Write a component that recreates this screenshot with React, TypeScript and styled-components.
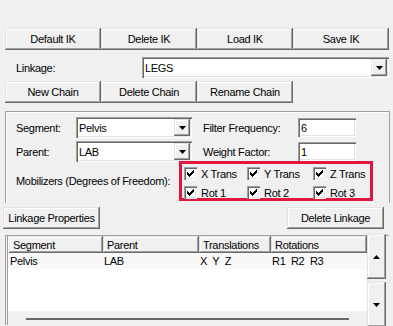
import styled, { createGlobalStyle } from 'styled-components';

const GlobalStyle = createGlobalStyle`
	html, body {
		margin: 0;
		padding: 0;
		background: #f0f0f0;
	}
	body {
		font-family: "Liberation Sans", Arial, sans-serif;
		font-size: 11px;
		letter-spacing: -0.3px;
		color: #000;
	}
`;

const raised = `
	background: #f0f0f0;
	box-shadow: inset -1px -1px #696969, inset 1px 1px #e3e3e3, inset -2px -2px #a0a0a0, inset 2px 2px #fff;
`;

const sunken = `
	background: #fff;
	box-shadow: inset 1px 1px #a0a0a0, inset 2px 2px #696969, inset -1px -1px #fff, inset -2px -2px #e3e3e3;
`;

const columns = [
	{ title: 'Segment', width: 94 },
	{ title: 'Parent', width: 96 },
	{ title: 'Translations', width: 72 },
	{ title: 'Rotations', width: 96 },
];

const rows = [['Pelvis', 'LAB', 'X  Y  Z', 'R1  R2  R3']];

const mobilizers = [
	['X Trans', 'Y Trans', 'Z Trans'],
	['Rot 1', 'Rot 2', 'Rot 3'],
];

const Arrow = ({ up }: { up?: boolean }) => (
	<svg width="7" height="4" viewBox="0 0 7 4">
		<polygon points={up ? '3.5,0 7,4 0,4' : '0,0 7,0 3.5,4'} fill="#000" />
	</svg>
);

const Select = ({ value, width }: { value: string; width: number }) => (
	<SelectBox $w={width}>
		<SelectText>{value}</SelectText>
		<DropButton>
			<Arrow />
		</DropButton>
	</SelectBox>
);

const Check = ({ label }: { label: string }) => (
	<CheckItem>
		<CheckBox>
			<svg width="7" height="7" viewBox="0 0 7 7">
				<path d="M0 2h1v1h1v1h1V3h1V2h1V1h1V0h1v3H6v1H5v1H4v1H3v1H2V6H1V5H0z" fill="#000" />
			</svg>
		</CheckBox>
		<CheckLabel>{label}</CheckLabel>
	</CheckItem>
);

export default function App() {
	return (
		<Page>
			<GlobalStyle />
			<ButtonRow>
				<Button>Default IK</Button>
				<Button>Delete IK</Button>
				<Button>Load IK</Button>
				<Button>Save IK</Button>
			</ButtonRow>

			<LinkageRow>
				<RowLabel>Linkage:</RowLabel>
				<Select value="LEGS" width={247} />
			</LinkageRow>

			<ChainRow>
				<Button>New Chain</Button>
				<Button>Delete Chain</Button>
				<Button>Rename Chain</Button>
			</ChainRow>

			<GroupBox>
				<FieldRow>
					<FieldLabel>Segment:</FieldLabel>
					<Select value="Pelvis" width={116} />
					<SideLabel>Filter Frequency:</SideLabel>
					<TextInput>6</TextInput>
				</FieldRow>
				<FieldRow>
					<FieldLabel>Parent:</FieldLabel>
					<Select value="LAB" width={116} />
					<SideLabel>Weight Factor:</SideLabel>
					<TextInput>1</TextInput>
				</FieldRow>
				<MobilizerRow>
					<MobilizerLabel>Mobilizers (Degrees of Freedom):</MobilizerLabel>
					<Highlight>
						{mobilizers.map((line, i) => (
							<CheckLine key={i}>
								{line.map((m) => (
									<Check key={m} label={m} />
								))}
							</CheckLine>
						))}
					</Highlight>
				</MobilizerRow>
			</GroupBox>

			<LinkageButtons>
				<Button $w={97}>Linkage Properties</Button>
				<Button $w={97}>Delete Linkage</Button>
			</LinkageButtons>

			<ListFrame>
				<ListView>
					<HeaderRow>
						{columns.map((c) => (
							<HeaderCell key={c.title} $w={c.width}>
								{c.title}
							</HeaderCell>
						))}
					</HeaderRow>
					<ListBody>
						{rows.map((r, i) => (
							<ListRow key={i}>
								{r.map((cell, j) => (
									<ListCell key={j} $w={columns[j].width}>
										{cell}
									</ListCell>
								))}
							</ListRow>
						))}
					</ListBody>
					<HScroll>
						<HThumb />
					</HScroll>
				</ListView>
				<SpinColumn>
					<SpinButton>
						<Arrow up />
					</SpinButton>
					<SpinButton>
						<Arrow />
					</SpinButton>
				</SpinColumn>
			</ListFrame>
		</Page>
	);
}

const Page = styled.div`
	width: 393px;
	height: 326px;
	box-sizing: border-box;
	padding-top: 28px;
	display: flex;
	flex-direction: column;
	overflow: hidden;
`;

const Button = styled.div<{ $w?: number }>`
	${raised}
	width: ${(p) => p.$w ?? 96}px;
	height: 22px;
	box-sizing: border-box;
	display: flex;
	align-items: center;
	justify-content: center;
	white-space: nowrap;
`;

const ButtonRow = styled.div`
	display: flex;
	margin-left: 5px;
`;

const LinkageRow = styled.div`
	display: flex;
	align-items: center;
	justify-content: space-between;
	margin: 7px 4px 0 16px;
`;

const RowLabel = styled.span``;

const ChainRow = styled.div`
	display: flex;
	margin: 3px 0 0 5px;
`;

const SelectBox = styled.div<{ $w: number }>`
	${sunken}
	width: ${(p) => p.$w}px;
	height: 21px;
	box-sizing: border-box;
	padding: 2px;
	display: flex;
	align-items: center;
`;

const SelectText = styled.span`
	flex: 1;
	padding-left: 1px;
`;

const DropButton = styled.span`
	${raised}
	width: 16px;
	height: 17px;
	display: flex;
	align-items: center;
	justify-content: center;
`;

const GroupBox = styled.div`
	margin: 8px 3px 0 5px;
	height: 92px;
	box-sizing: border-box;
	border: 1px solid #a0a0a0;
	border-bottom: none;
	box-shadow: inset 1px 1px #fff;
	padding: 5px 0 0 10px;
	display: flex;
	flex-direction: column;
	gap: 3px;
`;

const FieldRow = styled.div`
	display: flex;
	align-items: center;
	height: 21px;
`;

const FieldLabel = styled.span`
	width: 60px;
`;

const SideLabel = styled.span`
	width: 95px;
	margin-left: 11px;
`;

const TextInput = styled.div`
	${sunken}
	width: 58px;
	height: 19px;
	box-sizing: border-box;
	padding: 2px 3px;
	display: flex;
	align-items: center;
`;

const MobilizerRow = styled.div`
	display: flex;
	align-items: center;
	margin-top: -4px;
`;

const MobilizerLabel = styled.span`
	width: 163px;
`;

const Highlight = styled.div`
	width: 194px;
	height: 40px;
	box-sizing: border-box;
	border: 3px solid #e2173d;
	padding: 3px 0 0 2px;
	display: flex;
	flex-direction: column;
	gap: 6px;
`;

const CheckLine = styled.div`
	display: grid;
	grid-template-columns: 63px 66px 1fr;
`;

const CheckItem = styled.div`
	display: flex;
	align-items: center;
	gap: 4px;
`;

const CheckBox = styled.span`
	${sunken}
	width: 13px;
	height: 13px;
	box-sizing: border-box;
	display: flex;
	align-items: center;
	justify-content: center;
`;

const CheckLabel = styled.span``;

const LinkageButtons = styled.div`
	display: flex;
	justify-content: space-between;
	margin: 4px 9px 0 3px;
`;

const ListFrame = styled.div`
	margin: 6px 4px 0 5px;
	height: 90px;
	box-sizing: border-box;
	border-left: 1px solid #a0a0a0;
	border-top: 1px solid #a0a0a0;
	display: flex;
	align-items: flex-start;
`;

const ListView = styled.div`
	width: 360px;
	height: 89px;
	margin-left: 1px;
	box-sizing: border-box;
	border-left: 1px solid #a0a0a0;
	background: #fff;
	display: flex;
	flex-direction: column;
`;

const HeaderRow = styled.div`
	display: flex;
	height: 17px;
	padding-left: 1px;
`;

const HeaderCell = styled.div<{ $w: number }>`
	${raised}
	width: ${(p) => p.$w}px;
	box-sizing: border-box;
	padding-left: 4px;
	display: flex;
	align-items: center;
`;

const ListBody = styled.div`
	flex: 1;
	background: #fff;
`;

const ListRow = styled.div`
	display: flex;
	height: 16px;
	align-items: center;
	background: #f8f8f8;
`;

const ListCell = styled.div<{ $w: number }>`
	width: ${(p) => p.$w}px;
	padding-left: 2px;
	box-sizing: border-box;
	white-space: pre;
`;

const HScroll = styled.div`
	height: 14px;
	background: #f0f0f0;
	padding: 7px 0 0 18px;
	box-sizing: border-box;
`;

const HThumb = styled.div`
	width: 323px;
	height: 2px;
	background: #696969;
`;

const SpinColumn = styled.div`
	display: flex;
	flex-direction: column;
	gap: 3px;
	margin-top: -2px;
`;

const SpinButton = styled.div`
	${raised}
	width: 19px;
	height: 45px;
	display: flex;
	align-items: center;
	justify-content: center;
`;
